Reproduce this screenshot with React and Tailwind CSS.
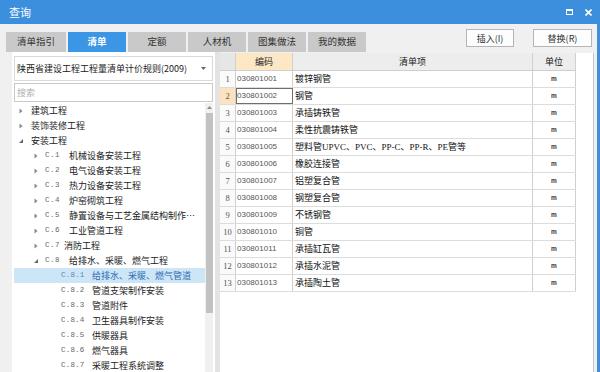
import React from "react";

const cjk = "font-['Noto_Sans_CJK_SC','Noto_Sans',sans-serif]";
const mixed = "font-['Liberation_Serif','Noto_Sans_CJK_SC',serif]";

const tabs = ["清单指引", "清单", "定额", "人材机", "图集做法", "我的数据"];

const tree = [
  { l: 1, t: "建筑工程", a: "r" },
  { l: 1, t: "装饰装修工程", a: "r" },
  { l: 1, t: "安装工程", a: "d" },
  { l: 2, c: "C.1", t: "机械设备安装工程", a: "r" },
  { l: 2, c: "C.2", t: "电气设备安装工程", a: "r" },
  { l: 2, c: "C.3", t: "热力设备安装工程", a: "r" },
  { l: 2, c: "C.4", t: "炉窑砌筑工程", a: "r" },
  { l: 2, c: "C.5", t: "静置设备与工艺金属结构制作…", a: "r" },
  { l: 2, c: "C.6", t: "工业管道工程", a: "r" },
  { l: 2, c: "C.7", t: "消防工程", a: "r", narrow: true },
  { l: 2, c: "C.8", t: "给排水、采暖、燃气工程", a: "d" },
  { l: 3, c: "C.8.1", t: "给排水、采暖、燃气管道", sel: true },
  { l: 3, c: "C.8.2", t: "管道支架制作安装" },
  { l: 3, c: "C.8.3", t: "管道附件" },
  { l: 3, c: "C.8.4", t: "卫生器具制作安装" },
  { l: 3, c: "C.8.5", t: "供暖器具" },
  { l: 3, c: "C.8.6", t: "燃气器具" },
  { l: 3, c: "C.8.7", t: "采暖工程系统调整" },
];

const rows = [
  ["030801001", "镀锌钢管"],
  ["030801002", "钢管"],
  ["030801003", "承插铸铁管"],
  ["030801004", "柔性抗震铸铁管"],
  ["030801005", "塑料管UPVC、PVC、PP-C、PP-R、PE管等"],
  ["030801006", "橡胶连接管"],
  ["030801007", "铝塑复合管"],
  ["030801008", "钢塑复合管"],
  ["030801009", "不锈钢管"],
  ["030801010", "铜管"],
  ["030801011", "承插缸瓦管"],
  ["030801012", "承插水泥管"],
  ["030801013", "承插陶土管"],
];

function Arrow({ a }) {
  if (a === "r")
    return (
      <svg width="8" height="8" viewBox="0 0 8 8">
        <path d="M2.5 1.5 L5.5 4 L2.5 6.5 Z" fill="#8a8a8a" />
      </svg>
    );
  return (
    <svg width="8" height="8" viewBox="0 0 8 8">
      <path d="M6 2 L6 6 L2 6 Z" fill="#6a6a6a" />
    </svg>
  );
}

function TreeRow({ r }) {
  const pl = r.l === 1 ? "pl-[3px]" : r.l === 2 ? "pl-[18px]" : "pl-[47px]";
  return (
    <div
      className={`h-[15px] flex items-center ${pl} ${
        r.sel ? "bg-[#cde6f7] text-[#2f6db5]" : "text-[#222]"
      } whitespace-nowrap`}
    >
      {r.a && (
        <span className="w-[8px] h-[8px] flex items-center justify-center shrink-0">
          <Arrow a={r.a} />
        </span>
      )}
      {r.l === 1 ? (
        <span className={`${cjk} text-[9px] leading-none ml-[6px]`}>{r.t}</span>
      ) : r.l === 2 ? (
        <>
          <span
            className={`font-['Liberation_Mono',monospace] text-[7.5px] leading-none text-[#666] ml-[5px] ${
              r.narrow ? "w-[19px]" : "w-[24px]"
            } shrink-0 tracking-[0.5px]`}
          >
            {r.c}
          </span>
          <span className={`${cjk} text-[9px] leading-none`}>{r.t}</span>
        </>
      ) : (
        <>
          <span
            className={`font-['Liberation_Mono',monospace] text-[7.5px] leading-none ${
              r.sel ? "text-[#5b84b8]" : "text-[#666]"
            } w-[31px] shrink-0 tracking-[0.2px]`}
          >
            {r.c}
          </span>
          <span className={`${cjk} text-[9px] leading-none`}>{r.t}</span>
        </>
      )}
    </div>
  );
}

export default function App() {
  return (
    <div className="w-[600px] h-[372px] bg-[#f0f0f0] flex flex-col overflow-hidden border-r-[3px] border-[#3b8fdc]">
      {/* title bar */}
      <div className="h-[24px] shrink-0 bg-[#3b8fdc] flex items-center pl-[9px] pr-[5px]">
        <span className={`${cjk} text-[11px] text-white leading-none`}>查询</span>
        <div className="ml-auto flex items-center gap-[12px]">
          <svg width="7" height="6" viewBox="0 0 7 6">
            <rect x="0.5" y="0.5" width="6" height="5" fill="none" stroke="white" strokeWidth="1" />
            <rect x="0" y="0" width="7" height="2" fill="white" />
          </svg>
          <svg width="7" height="7" viewBox="0 0 7 7">
            <path d="M0.5 0.5 L6.5 6.5 M6.5 0.5 L0.5 6.5" stroke="white" strokeWidth="1.6" />
          </svg>
        </div>
      </div>

      {/* tabs + buttons */}
      <div className="h-[28px] shrink-0 flex pl-[6px] pr-[5px] pt-[5px]">
        <div className="flex gap-[2px] self-end">
          {tabs.map((t, i) => (
            <div
              key={t}
              className={`${i === 0 ? "w-[60px]" : "w-[58px]"} h-[20px] flex items-center justify-center ${cjk} text-[9.5px] leading-none ${
                i === 1 ? "bg-[#3b96e6] text-white font-bold" : "bg-[#c9c9c9] text-[#333]"
              }`}
            >
              {t}
            </div>
          ))}
        </div>
        <div className="ml-auto flex gap-[19px] self-start">
          <button className={`w-[48px] h-[18px] bg-[#fdfdfd] border border-[#b5b5b5] ${cjk} text-[9px] leading-none text-[#333]`}>
            插入(I)
          </button>
          <button className={`w-[59px] h-[18px] bg-[#fdfdfd] border border-[#b5b5b5] ${cjk} text-[9px] leading-none text-[#333]`}>
            替换(R)
          </button>
        </div>
      </div>

      {/* content */}
      <div className="flex-1 flex min-h-0 pl-[12px]">
        {/* left panel */}
        <div className="w-[203px] shrink-0 bg-white flex flex-col px-[2px] pt-[4px]">
          <div className="h-[25px] shrink-0 border border-[#d9d9d9] flex items-center pl-[2px] pr-[6px]">
            <span className={`${cjk} text-[9px] leading-none text-[#222] whitespace-nowrap`}>
              陕西省建设工程工程量清单计价规则(2009)
            </span>
            <svg className="ml-auto" width="5" height="3" viewBox="0 0 5 3">
              <path d="M0 0 L5 0 L2.5 3 Z" fill="#666" />
            </svg>
          </div>
          <div className="h-[19px] shrink-0 mt-[2px] border border-[#c9c9c9] flex items-center pl-[2px]">
            <span className={`${cjk} text-[9px] leading-none text-[#b0b0b0]`}>搜索</span>
          </div>
          <div className="flex-1 min-h-0 flex mt-[1px] overflow-hidden">
            <div className="flex-1 min-w-0 overflow-hidden">
              {tree.map((r, i) => (
                <TreeRow key={i} r={r} />
              ))}
            </div>
            <div className="w-[8px] shrink-0 bg-[#f0f0f0] flex flex-col items-center">
              <svg className="mt-[3px]" width="5" height="3" viewBox="0 0 5 3">
                <path d="M0 3 L5 3 L2.5 0 Z" fill="#8a8a8a" />
              </svg>
              <div className="w-[7px] h-[200px] mt-[4px] bg-[#c2c2c2]" />
            </div>
          </div>
        </div>

        <div className="w-[5px] shrink-0 bg-[#e3e3e3]" />

        {/* grid */}
        <div className="w-[374px] shrink-0 bg-white border-r border-[#c4c4c4] mt-[1px]">
          <div className="w-[356px]">
            <div className="flex h-[18px] border-b border-[#cfcfcf]">
              <div className="w-[16px] bg-[#e6e6e6] border-r border-[#d0d0d0]" />
              <div className={`w-[57px] bg-[#fde8c6] border-r border-[#d0d0d0] flex items-center justify-center ${cjk} text-[9px] leading-none text-[#222]`}>
                编码
              </div>
              <div className={`w-[240px] bg-[#ededed] border-r border-[#d0d0d0] flex items-center justify-center ${cjk} text-[9px] leading-none text-[#222]`}>
                清单项
              </div>
              <div className={`w-[43px] bg-[#ededed] border-r border-[#d0d0d0] flex items-center justify-center ${cjk} text-[9px] leading-none text-[#222]`}>
                单位
              </div>
            </div>
            {rows.map(([code, name], i) => (
              <div key={code} className="flex h-[17px] border-b border-[#dcdcdc]">
                <div
                  className={`w-[16px] border-r border-[#d0d0d0] flex items-center justify-center font-['Liberation_Serif',serif] text-[8.5px] leading-none text-[#555] ${
                    i === 1 ? "bg-[#fbe3bd]" : "bg-[#fafafa]"
                  }`}
                >
                  {i + 1}
                </div>
                <div
                  className={`w-[57px] border-r border-[#d0d0d0] flex items-center pl-[1px] font-['Liberation_Sans',sans-serif] text-[8px] leading-none text-[#555] ${
                    i === 1 ? "outline outline-1 outline-[#6e6e6e] -outline-offset-1" : ""
                  }`}
                >
                  {code}
                </div>
                <div className={`w-[240px] border-r border-[#d0d0d0] flex items-center pl-[2px] ${mixed} text-[9px] leading-none text-[#111] whitespace-nowrap`}>
                  {name}
                </div>
                <div className="w-[43px] border-r border-[#d0d0d0] flex items-center justify-center font-['Liberation_Sans',sans-serif] font-bold text-[6.5px] leading-none text-[#333]">
                  m
                </div>
              </div>
            ))}
          </div>
        </div>
      </div>
    </div>
  );
}
